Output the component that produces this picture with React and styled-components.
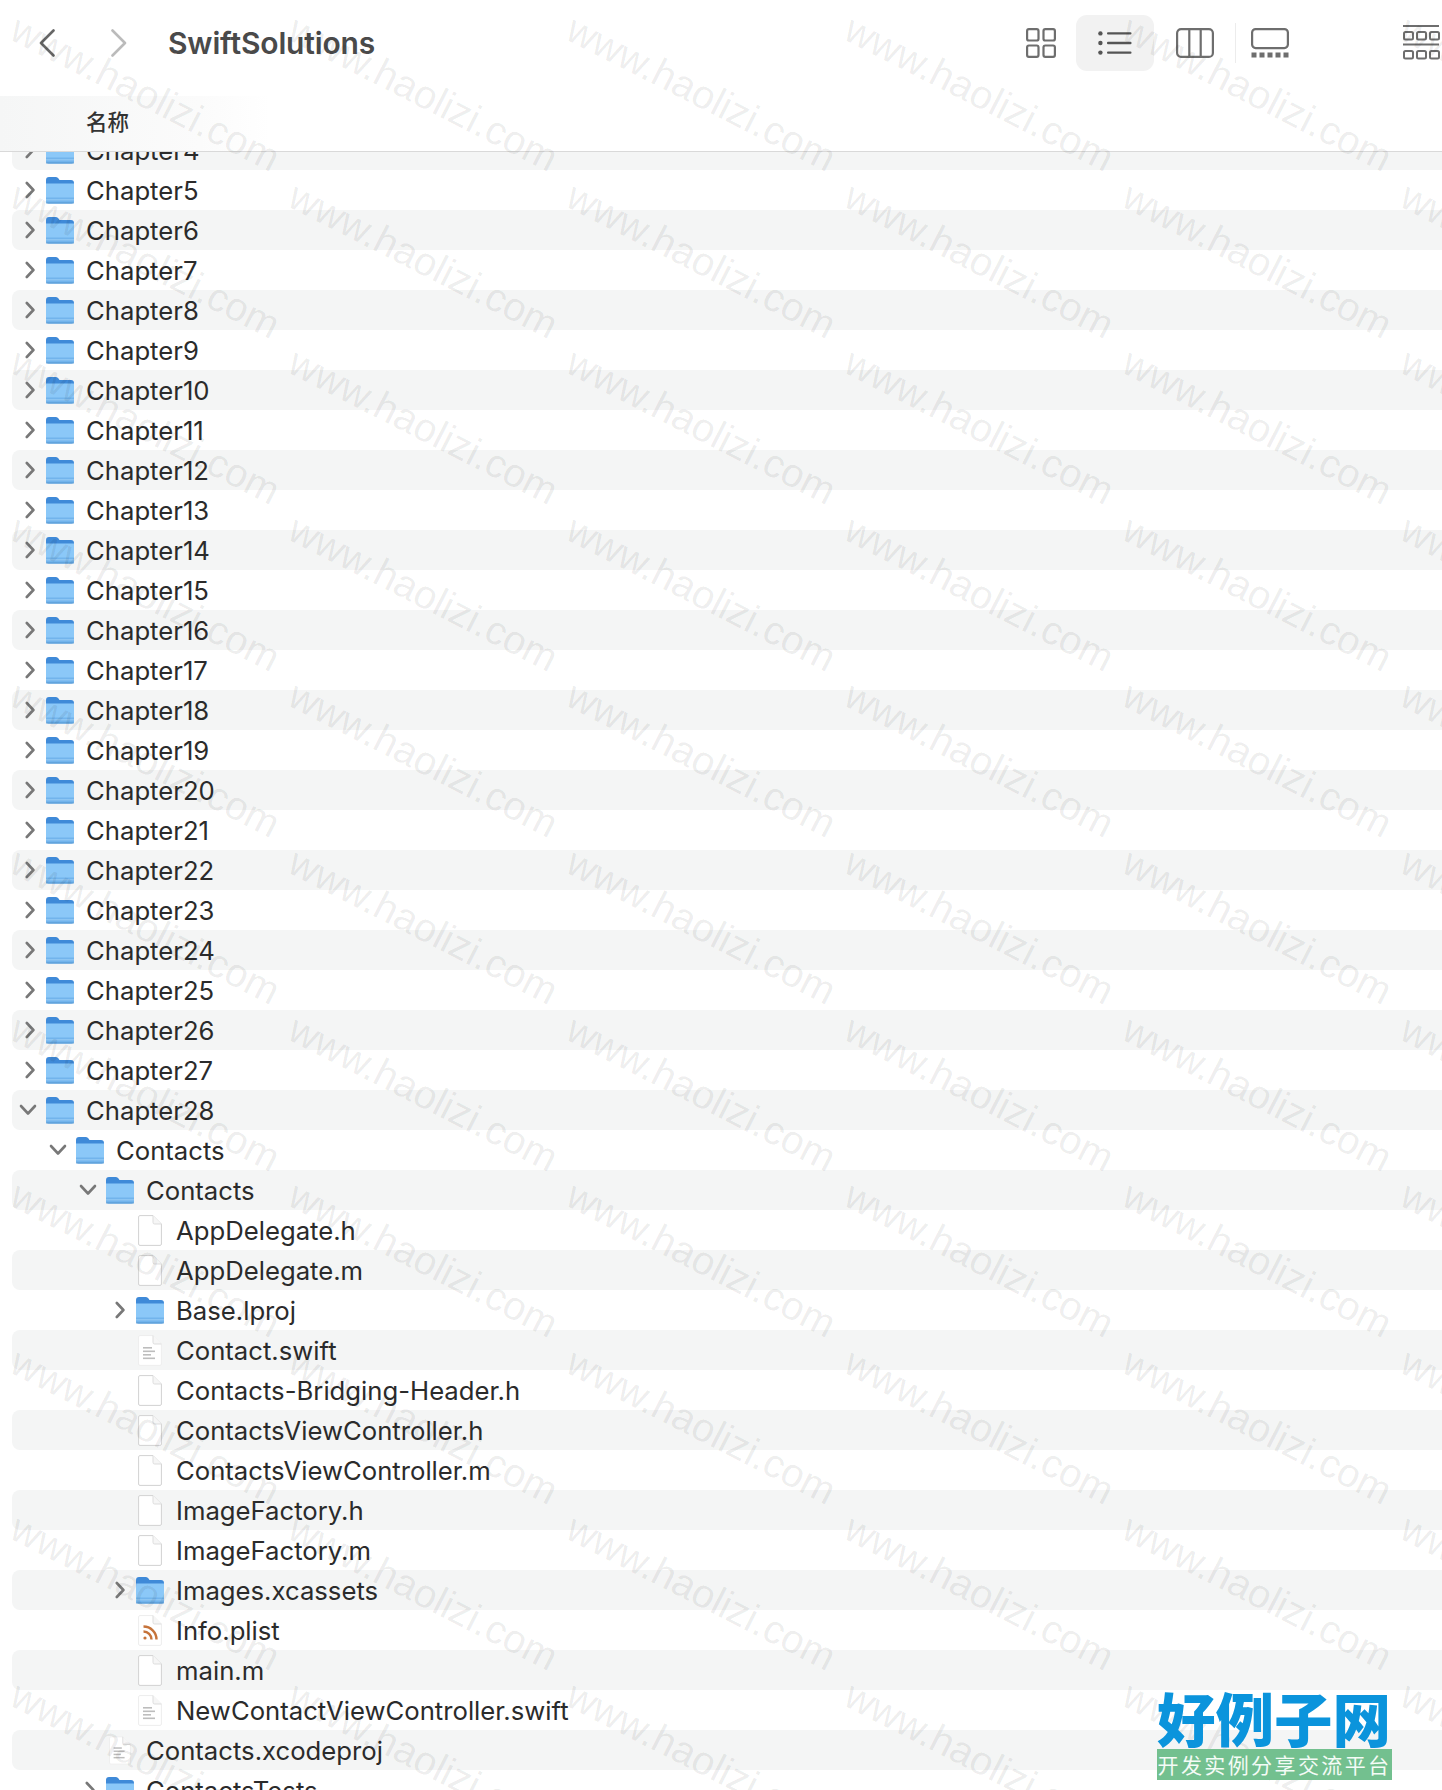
import styled, { createGlobalStyle } from 'styled-components'

const GlobalStyle = createGlobalStyle`
  html, body {
    margin: 0;
    padding: 0;
    background: #ffffff;
  }
  body {
    font-family: Inter, "Noto Sans CJK SC", sans-serif;
    overflow: hidden;
  }
`

const Page = styled.div`
  position: relative;
  width: 1442px;
  height: 1790px;
  display: flex;
  flex-direction: column;
  overflow: hidden;
  background: #ffffff;
`

const Toolbar = styled.div`
  height: 86px;
  padding-left: 39px;
  display: flex;
  align-items: center;
  flex-shrink: 0;
`

const NavButton = styled.div`
  width: 16px;
  height: 28px;
  margin-right: ${(p) => p.$gap}px;
  color: ${(p) => p.$color};
`

const Title = styled.div`
  font-size: 30px;
  font-weight: 600;
  color: #4a4a4a;
  letter-spacing: -0.15px;
`

const ViewSwitch = styled.div`
  margin-left: auto;
  display: flex;
  align-items: center;
  color: #6e6e6e;
`

const ViewButton = styled.div`
  width: ${(p) => p.$w}px;
  height: 56px;
  display: flex;
  align-items: center;
  justify-content: center;
  border-radius: 11px;
  background: ${(p) => (p.$active ? '#f2f2f2' : 'transparent')};
`

const Divider = styled.div`
  width: 1px;
  height: 40px;
  background: #ececec;
`

const ArrangeButton = styled.div`
  width: 39px;
  height: 36px;
  margin-left: 100px;
  color: #6e6e6e;
  overflow: hidden;
`

const ColumnHeader = styled.div`
  height: 56px;
  margin-top: 10px;
  flex-shrink: 0;
  padding: 0 0 6px 86px;
  display: flex;
  align-items: center;
  box-sizing: border-box;
  background: linear-gradient(90deg, #f5f6f6 0, #fbfbfb 200px, #ffffff 270px);
  border-bottom: 1px solid #d9d9d9;
  font-family: "Noto Sans CJK SC", sans-serif;
  font-size: 21.5px;
  font-weight: 500;
  color: #333333;
`

const ListViewport = styled.div`
  flex: 1;
  overflow: hidden;
`

const Rows = styled.div`
  margin-top: -22px;
`

const Row = styled.div`
  height: 40px;
  margin-left: 12px;
  padding-left: ${(p) => p.$level * 30}px;
  display: flex;
  align-items: center;
  border-radius: 8px 0 0 8px;
  background: ${(p) => (p.$striped ? '#f4f5f5' : 'transparent')};
`

const Toggle = styled.div`
  width: 34px;
  height: 40px;
  display: flex;
  align-items: center;
  padding-left: ${(p) => (p.$open ? 7 : 13)}px;
  box-sizing: border-box;
  color: #787878;
  flex-shrink: 0;
`

const IconSlot = styled.div`
  width: 28px;
  height: 40px;
  margin-right: 12px;
  display: flex;
  align-items: center;
  justify-content: center;
  flex-shrink: 0;
`

const Name = styled.div`
  font-size: 25.7px;
  color: #2b2b2b;
  white-space: nowrap;
`

const Watermarks = styled.div`
  position: absolute;
  inset: 0;
  padding: 8px 0 0 23px;
  display: grid;
  grid-template-columns: repeat(6, 278px);
  grid-auto-rows: 166.6px;
  pointer-events: none;
`

const Mark = styled.div`
  font-family: "Liberation Sans", sans-serif;
  font-size: 40px;
  line-height: 1;
  color: rgba(0, 0, 0, 0.075);
  white-space: nowrap;
  transform: rotate(27deg);
  transform-origin: 0 0;
`

const Logo = styled.div`
  position: absolute;
  right: 50px;
  bottom: 10px;
  width: 235px;
  display: flex;
  flex-direction: column;
  font-family: "Noto Sans CJK SC", sans-serif;
`

const LogoName = styled.div`
  font-size: 58.5px;
  line-height: 60px;
  font-weight: 900;
  color: #0b94dc;
  white-space: nowrap;
`

const LogoBanner = styled.div`
  height: 31px;
  margin-top: 2px;
  background: #73c08f;
  color: #f4fbf6;
  font-size: 21px;
  line-height: 31px;
  letter-spacing: 2.4px;
  text-align: center;
  white-space: nowrap;
`

function Chevron({ back }) {
  return (
    <svg width="16" height="28" viewBox="0 0 16 28" fill="none" stroke="currentColor" strokeWidth="2.6" strokeLinecap="round" strokeLinejoin="round">
      <path d={back ? 'M14.5 1.5 L2 14 L14.5 26.5' : 'M1.5 1.5 L14 14 L1.5 26.5'} />
    </svg>
  )
}

function GridIcon() {
  return (
    <svg width="30" height="30" viewBox="0 0 30 30" fill="none" stroke="currentColor" strokeWidth="2.2">
      <rect x="1.1" y="1.1" width="11.4" height="11.4" rx="1.8" />
      <rect x="17.5" y="1.1" width="11.4" height="11.4" rx="1.8" />
      <rect x="1.1" y="17.5" width="11.4" height="11.4" rx="1.8" />
      <rect x="17.5" y="17.5" width="11.4" height="11.4" rx="1.8" />
    </svg>
  )
}

function ListIcon() {
  return (
    <svg width="34" height="24" viewBox="0 0 34 24" fill="#555555">
      <circle cx="2.4" cy="2.4" r="2.2" />
      <circle cx="2.4" cy="12" r="2.2" />
      <circle cx="2.4" cy="21.6" r="2.2" />
      <rect x="9" y="1.2" width="24.5" height="2.4" rx="1" />
      <rect x="9" y="10.8" width="24.5" height="2.4" rx="1" />
      <rect x="9" y="20.4" width="24.5" height="2.4" rx="1" />
    </svg>
  )
}

function ColumnsIcon() {
  return (
    <svg width="38" height="30" viewBox="0 0 38 30" fill="none" stroke="currentColor" strokeWidth="2.2">
      <rect x="1.1" y="1.1" width="35.8" height="27.8" rx="4" />
      <path d="M13.3 1 V29 M24.7 1 V29" />
    </svg>
  )
}

function GalleryIcon() {
  return (
    <svg width="38" height="30" viewBox="0 0 38 30" fill="none">
      <rect x="1.1" y="1.1" width="35.8" height="19" rx="3.5" stroke="currentColor" strokeWidth="2.2" />
      <g fill="currentColor">
        <rect x="0.5" y="24.5" width="5" height="5" />
        <rect x="8.5" y="24.5" width="5" height="5" />
        <rect x="16.5" y="24.5" width="5" height="5" />
        <rect x="24.5" y="24.5" width="5" height="5" />
        <rect x="32.5" y="24.5" width="5" height="5" />
      </g>
    </svg>
  )
}

function ArrangeIcon() {
  return (
    <svg width="42" height="36" viewBox="0 0 42 36" fill="none" stroke="currentColor" strokeWidth="2">
      <path d="M0 1 H36 M0 19.5 H36" />
      <rect x="1" y="7" width="9" height="7.5" rx="1.5" />
      <rect x="14" y="7" width="9" height="7.5" rx="1.5" />
      <rect x="27" y="7" width="9" height="7.5" rx="1.5" />
      <rect x="1" y="26" width="9" height="7.5" rx="1.5" />
      <rect x="14" y="26" width="9" height="7.5" rx="1.5" />
      <rect x="27" y="26" width="9" height="7.5" rx="1.5" />
    </svg>
  )
}

function Disclosure({ open }) {
  if (open) {
    return (
      <svg width="18" height="12" viewBox="0 0 18 12" fill="none" stroke="currentColor" strokeWidth="2.6" strokeLinecap="round" strokeLinejoin="round">
        <path d="M2 2 L9 9.5 L16 2" />
      </svg>
    )
  }
  return (
    <svg width="10" height="18" viewBox="0 0 10 18" fill="none" stroke="currentColor" strokeWidth="2.6" strokeLinecap="round" strokeLinejoin="round">
      <path d="M1.8 2 L8.4 9 L1.8 16" />
    </svg>
  )
}

function Folder() {
  return (
    <svg width="28" height="28" viewBox="0 0 28 28">
      <path d="M0 4 Q0 1 3 1 H10 Q11.5 1 12.5 2.5 L13.5 4 H25 Q28 4 28 7 V12 H0 Z" fill="#3f8ad8" />
      <path d="M0 7.5 H28 V25 Q28 27.5 25.5 27.5 H2.5 Q0 27.5 0 25 Z" fill="#8bc8f8" />
      <path d="M0 21.5 H28 V25 Q28 27.5 25.5 27.5 H2.5 Q0 27.5 0 25 Z" fill="#72b4ec" />
      <rect x="0" y="23.5" width="28" height="0.8" fill="#a6d5f8" />
      <rect x="0" y="26.4" width="28" height="1.1" fill="#4f8fca" opacity="0.7" />
    </svg>
  )
}

function Doc({ kind, small }) {
  const w = small ? 22 : 24
  return (
    <svg width={w} height="31" viewBox="0 0 24 31">
      <path
        d="M2 0.6 H15 L23.4 9 V29 Q23.4 30.4 22 30.4 H2 Q0.6 30.4 0.6 29 V2 Q0.6 0.6 2 0.6 Z"
        fill="#ffffff"
        stroke={kind === 'plain' ? '#d2d2d2' : '#ededed'}
        strokeWidth="1"
      />
      <path d="M15 0.6 V7.4 Q15 9 16.6 9 H23.4" fill="#f6f6f6" stroke="#dddddd" strokeWidth="1" />
      {kind === 'text' && (
        <g fill="#bdbdbd">
          <rect x="5" y="12" width="9" height="1.6" />
          <rect x="5" y="15.5" width="12" height="1.6" />
          <rect x="5" y="19" width="8" height="1.6" />
          <rect x="5" y="22.5" width="12" height="1.6" />
        </g>
      )}
      {kind === 'rss' && (
        <g fill="none" stroke="#c6733a" strokeWidth="2.4">
          <circle cx="7" cy="23" r="1.6" fill="#c6733a" stroke="none" />
          <path d="M5.5 16.5 A8 8 0 0 1 13.5 24.5" />
          <path d="M5.5 11.5 A13 13 0 0 1 18.5 24.5" />
        </g>
      )}
    </svg>
  )
}

const chapters = []
for (let n = 4; n <= 27; n++) {
  chapters.push({ name: 'Chapter' + n, level: 0, toggle: 'closed', icon: 'folder' })
}

const rows = [
  ...chapters,
  { name: 'Chapter28', level: 0, toggle: 'open', icon: 'folder' },
  { name: 'Contacts', level: 1, toggle: 'open', icon: 'folder' },
  { name: 'Contacts', level: 2, toggle: 'open', icon: 'folder' },
  { name: 'AppDelegate.h', level: 3, icon: 'plain' },
  { name: 'AppDelegate.m', level: 3, icon: 'plain' },
  { name: 'Base.lproj', level: 3, toggle: 'closed', icon: 'folder' },
  { name: 'Contact.swift', level: 3, icon: 'text' },
  { name: 'Contacts-Bridging-Header.h', level: 3, icon: 'plain' },
  { name: 'ContactsViewController.h', level: 3, icon: 'plain' },
  { name: 'ContactsViewController.m', level: 3, icon: 'plain' },
  { name: 'ImageFactory.h', level: 3, icon: 'plain' },
  { name: 'ImageFactory.m', level: 3, icon: 'plain' },
  { name: 'Images.xcassets', level: 3, toggle: 'closed', icon: 'folder' },
  { name: 'Info.plist', level: 3, icon: 'rss' },
  { name: 'main.m', level: 3, icon: 'plain' },
  { name: 'NewContactViewController.swift', level: 3, icon: 'text' },
  { name: 'Contacts.xcodeproj', level: 2, icon: 'text' },
  { name: 'ContactsTests', level: 2, toggle: 'closed', icon: 'folder' },
]

function App() {
  return (
    <Page>
      <GlobalStyle />
      <Toolbar>
        <NavButton $gap={56} $color="#666666"><Chevron back /></NavButton>
        <NavButton $gap={41} $color="#bbbbbb"><Chevron /></NavButton>
        <Title>SwiftSolutions</Title>
        <ViewSwitch>
          <ViewButton $w={70}><GridIcon /></ViewButton>
          <ViewButton $w={78} $active><ListIcon /></ViewButton>
          <ViewButton $w={81}><ColumnsIcon /></ViewButton>
          <Divider />
          <ViewButton $w={67}><GalleryIcon /></ViewButton>
          <ArrangeButton><ArrangeIcon /></ArrangeButton>
        </ViewSwitch>
      </Toolbar>
      <ColumnHeader>名称</ColumnHeader>
      <ListViewport>
        <Rows>
          {rows.map((row, index) => (
            <Row key={index} $level={row.level} $striped={index % 2 === 0}>
              <Toggle $open={row.toggle === 'open'}>
                {row.toggle && <Disclosure open={row.toggle === 'open'} />}
              </Toggle>
              <IconSlot>
                {row.icon === 'folder' ? <Folder /> : <Doc kind={row.icon} small={row.level < 3} />}
              </IconSlot>
              <Name>{row.name}</Name>
            </Row>
          ))}
        </Rows>
      </ListViewport>
      <Watermarks>
        {Array.from({ length: 66 }).map((_, index) => (
          <Mark key={index}>www.haolizi.com</Mark>
        ))}
      </Watermarks>
      <Logo>
        <LogoName>好例子网</LogoName>
        <LogoBanner>开发实例分享交流平台</LogoBanner>
      </Logo>
    </Page>
  )
}

export default App
